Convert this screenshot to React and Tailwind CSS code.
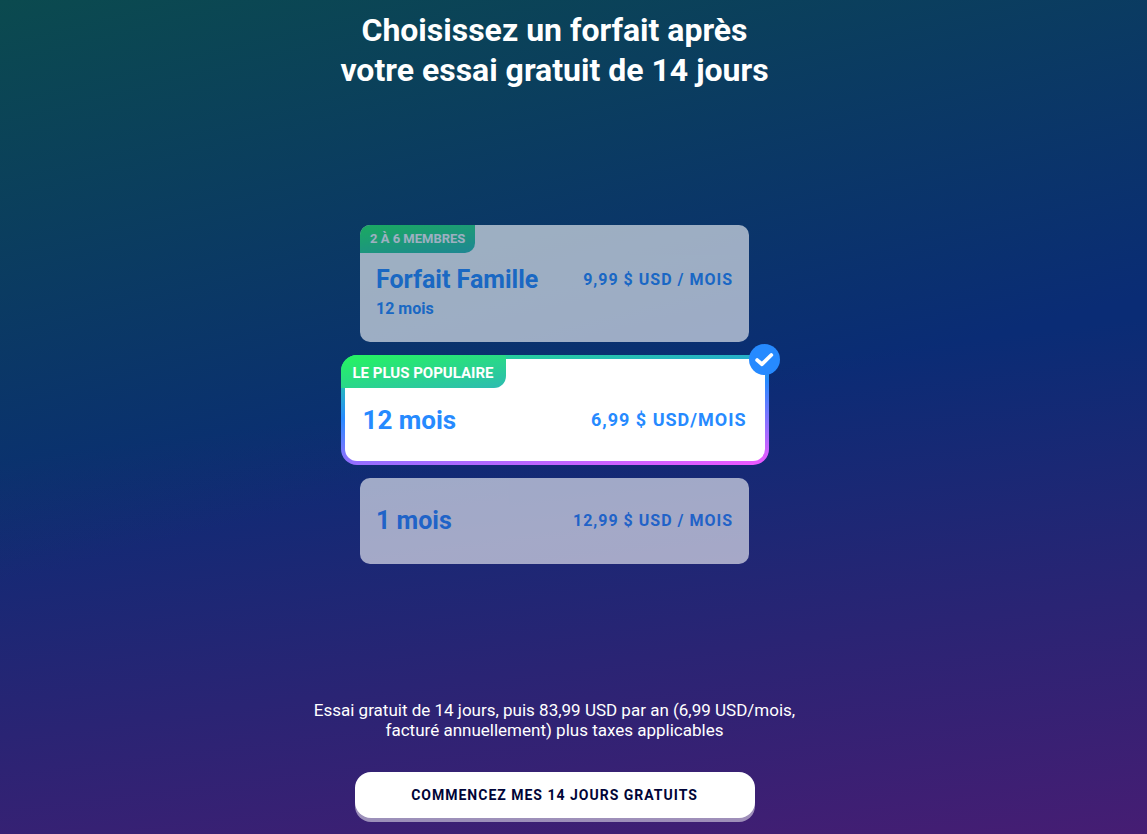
import React, { useState } from "react";

const PLANS = [
  {
    id: "family",
    badge: "2 à 6 membres",
    title: "Forfait Famille",
    subtitle: "12 mois",
    price: "9,99 $ USD / mois",
  },
  {
    id: "yearly",
    badge: "Le plus populaire",
    title: "12 mois",
    price: "6,99 $ USD/mois",
  },
  {
    id: "monthly",
    title: "1 mois",
    price: "12,99 $ USD / mois",
  },
];

export default function App() {
  const [selected, setSelected] = useState("yearly");

  return (
    <div className="flex min-h-screen flex-col items-center bg-[#000437] bg-[linear-gradient(166deg,#0b4d4b_-5%,#0b4d4b00_52%),linear-gradient(173deg,#0a2c75_47%,#4a1c73_104%)] pr-[38px] pb-3 pt-2.5 font-[Roboto,'Open_Sans',sans-serif] text-white">
      <h1 className="text-center text-[32px] leading-10 font-bold">
        Choisissez un forfait après
        <br />
        votre essai gratuit de 14 jours
      </h1>

      <fieldset
        aria-label="Forfait"
        className="mt-[135px] flex w-full max-w-[428px] flex-col items-center gap-[13px]"
      >
        {PLANS.map((plan) => (
          <PlanCard
            key={plan.id}
            plan={plan}
            active={plan.id === selected}
            onSelect={() => setSelected(plan.id)}
          />
        ))}
      </fieldset>

      <p className="mt-[136px] max-w-[490px] text-center text-[17px] leading-5">
        Essai gratuit de 14 jours, puis 83,99 USD par an (6,99 USD/mois,
        <br />
        facturé annuellement) plus taxes applicables
      </p>

      <button
        type="button"
        className="mt-8 h-[46px] w-full max-w-[400px] rounded-2xl bg-white text-sm font-bold tracking-[1px] text-[#000437] uppercase shadow-[0_4px_0_rgba(255,255,255,0.5)]"
      >
        Commencez mes 14 jours gratuits
      </button>
    </div>
  );
}

function PlanCard({ plan, active, onSelect }) {
  return (
    <label
      className={`relative block cursor-pointer text-[#268aff] ${
        active
          ? "w-full rounded-2xl bg-[linear-gradient(175deg,#26f663_-8%,#268aff_43%,#fc55ff_103%)] p-1"
          : "w-[389px] max-w-full rounded-[10px] bg-white opacity-60"
      }`}
    >
      <input
        type="radio"
        name="plan"
        value={plan.id}
        checked={active}
        onChange={onSelect}
        className="sr-only"
      />
      {plan.badge && (
        <span
          className={`absolute top-0 left-0 flex items-center bg-[linear-gradient(170deg,#26f066_10%,#2dbbb2)] font-bold whitespace-nowrap text-white uppercase ${
            active
              ? "h-[33px] rounded-tl-2xl rounded-br-xl px-3 pt-1 text-[15px]"
              : "h-7 rounded-tl-[10px] rounded-br-[10px] px-2.5 text-[13px]"
          }`}
        >
          {plan.badge}
        </span>
      )}
      {active && <CheckBadge />}
      <span
        className={`block ${
          active
            ? "rounded-xl bg-white px-[18px] pt-[46px] pb-[26px]"
            : plan.badge
              ? "px-4 pt-10 pb-[21px]"
              : "px-4 py-7"
        }`}
      >
        <span className="flex items-center justify-between">
          <span
            className={`leading-[30px] font-bold ${
              active ? "text-[26px]" : "text-[25px]"
            }`}
          >
            {plan.title}
          </span>
          <span
            className={`leading-[30px] font-bold tracking-[1px] uppercase ${
              active ? "text-lg" : "text-base"
            }`}
          >
            {plan.price}
          </span>
        </span>
        {plan.subtitle && (
          <span className="block pt-0.5 text-base leading-6 font-bold">
            {plan.subtitle}
          </span>
        )}
      </span>
    </label>
  );
}

function CheckBadge() {
  return (
    <svg
      viewBox="0 0 31 31"
      className="absolute -top-[11px] -right-[11px] size-[31px]"
      aria-hidden="true"
    >
      <circle cx="15.5" cy="15.5" r="15.5" fill="#268aff" />
      <path
        d="M8.2 16.1 13 20.2 22.3 11"
        fill="none"
        stroke="#fff"
        strokeWidth="3.8"
        strokeLinecap="round"
        strokeLinejoin="round"
      />
    </svg>
  );
}
